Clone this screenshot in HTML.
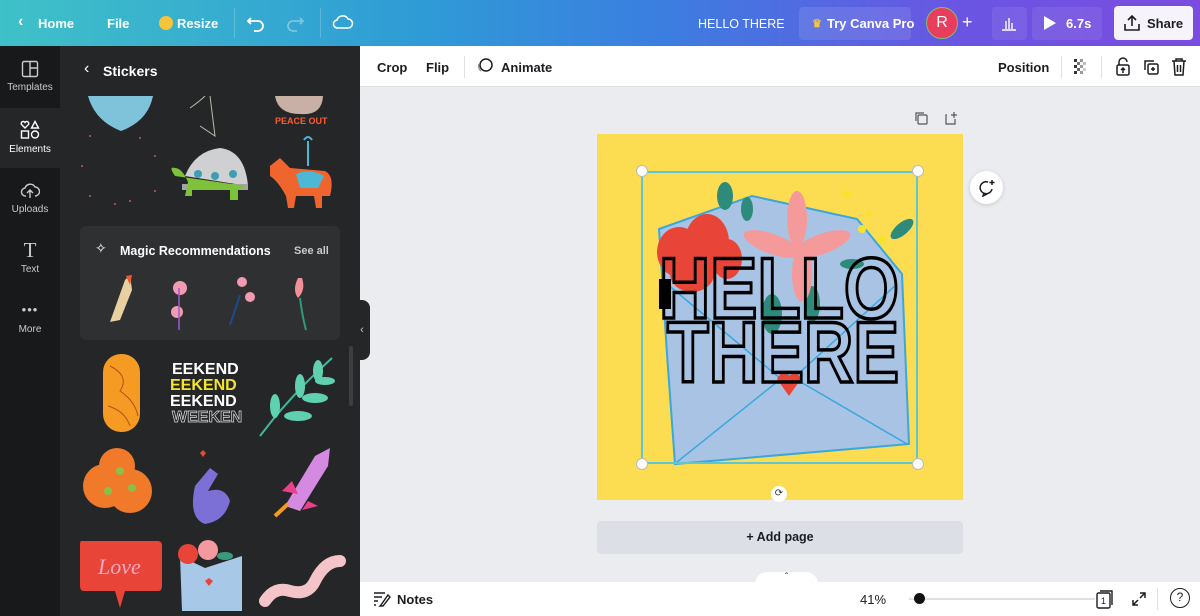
<!DOCTYPE html>
<html><head><meta charset="utf-8"><style>
*{margin:0;padding:0;box-sizing:border-box}
body{width:1200px;height:616px;overflow:hidden;font-family:"Liberation Sans",sans-serif;background:#ebecf0;position:relative}
.top{position:absolute;left:0;top:0;width:1200px;height:46px;background:linear-gradient(90deg,#3fc1c8 0%,#2f9bd6 35%,#3b7ee0 55%,#6a55e2 80%,#7b4ce0 100%);color:#fff;font-size:13px;font-weight:bold}
.top span{position:absolute;top:16px}
.rail{position:absolute;left:0;top:46px;width:60px;height:570px;background:#18191b}
.rail>div{position:absolute;left:0;width:60px;height:60px;text-align:center;color:#c9cacc;font-size:10px}
.rail svg{position:absolute;left:21px;top:14px}
.rail .lb{position:absolute;left:0;top:36px;width:60px}
.panel{position:absolute;left:60px;top:46px;width:300px;height:570px;background:#252627}
.tool{position:absolute;left:360px;top:46px;width:840px;height:41px;background:#fff;border-bottom:1px solid #dde0e4;font-size:13px;font-weight:bold;color:#1b1d21}
.tool span{position:absolute;top:14px}
.bottom{position:absolute;left:360px;top:582px;width:840px;height:34px;background:#fff;font-size:13px;color:#1b1d21}
</style></head><body>
<div class="top">
<span style="left:18px;font-size:16px;top:13px">‹</span><span style="left:38px">Home</span>
<span style="left:107px">File</span>
<div style="position:absolute;left:159px;top:16px;width:14px;height:14px;border-radius:50%;background:#f5c43a"></div>
<span style="left:177px">Resize</span>
<div style="position:absolute;left:234px;top:8px;width:1px;height:30px;background:rgba(255,255,255,.2)"></div>
<svg style="position:absolute;left:246px;top:13px" width="20" height="20" viewBox="0 0 20 20"><path d="M5 5 L2 8 L5 11 M2 8 H12 A5 5 0 0 1 12 18 H8" stroke="#fff" stroke-width="1.8" fill="none"/></svg>
<svg style="position:absolute;left:285px;top:13px" width="20" height="20" viewBox="0 0 20 20"><path d="M15 5 L18 8 L15 11 M18 8 H8 A5 5 0 0 0 8 18 H12" stroke="rgba(255,255,255,.35)" stroke-width="1.8" fill="none"/></svg>
<div style="position:absolute;left:320px;top:8px;width:1px;height:30px;background:rgba(255,255,255,.2)"></div>
<svg style="position:absolute;left:332px;top:12px" width="22" height="20" viewBox="0 0 22 20"><path d="M6 16 A4 4 0 0 1 5 8 A6 6 0 0 1 16 7 A4.5 4.5 0 0 1 16 16 Z" stroke="#fff" stroke-width="1.6" fill="none"/></svg>
<span style="left:698px;font-weight:normal;font-size:12.5px;top:17px">HELLO THERE</span>
<div style="position:absolute;left:799px;top:7px;width:112px;height:33px;background:rgba(255,255,255,.1);border-radius:4px"></div>
<span style="left:812px;color:#f5c43a;font-size:11px;top:17px">♛</span><span style="left:827px">Try Canva Pro</span>
<div style="position:absolute;left:926px;top:7px;width:32px;height:32px;border-radius:50%;background:#e93d5e;border:1.5px solid #7fc06d;text-align:center;line-height:29px;font-size:16px;font-weight:normal">R</div>
<span style="left:962px;font-size:18px;top:12px;font-weight:normal">+</span>
<div style="position:absolute;left:992px;top:7px;width:35px;height:33px;background:rgba(255,255,255,.08);border-radius:4px"></div>
<svg style="position:absolute;left:1000px;top:14px" width="18" height="18" viewBox="0 0 18 18"><path d="M2 16 H16 M6 15 V7 M9 15 V4 M12 15 V9" stroke="#fff" stroke-width="1.4"/></svg>
<div style="position:absolute;left:1032px;top:7px;width:70px;height:33px;background:rgba(255,255,255,.08);border-radius:4px"></div>
<svg style="position:absolute;left:1043px;top:15px" width="14" height="16"><path d="M1 1 L13 8 L1 15Z" fill="#fff"/></svg>
<span style="left:1066px">6.7s</span>
<div style="position:absolute;left:1114px;top:6px;width:79px;height:34px;background:#f6f3fb;border-radius:4px;color:#1b1d21">
<svg style="position:absolute;left:9px;top:8px" width="18" height="18" viewBox="0 0 18 18"><path d="M9 12 V2 M5 6 L9 2 L13 6 M2 10 V16 H16 V10" stroke="#1b1d21" stroke-width="1.6" fill="none"/></svg>
<span style="left:33px;top:10px">Share</span></div>
</div>

<div class="rail">
<div style="top:0"><svg width="18" height="18" viewBox="0 0 18 18"><rect x="1.5" y="1.5" width="15" height="15" rx="1.5" stroke="#c9cacc" stroke-width="1.4" fill="none"/><path d="M9 1.5 V16.5 M9 8 H16.5" stroke="#c9cacc" stroke-width="1.4"/></svg><div class="lb">Templates</div></div>
<div style="top:62px;background:#252627;color:#fff"><svg width="20" height="20" viewBox="0 0 20 20" stroke="#fff" stroke-width="1.4" fill="none" style="left:20px;top:12px"><path d="M5 8 L1.5 4.5 A2 2 0 0 1 5 2.5 A2 2 0 0 1 8.5 4.5Z"/><path d="M15 1.5 L18.5 8 H11.5Z"/><rect x="1.5" y="11" width="7" height="7"/><circle cx="15" cy="14.5" r="3.5"/></svg><div class="lb">Elements</div></div>
<div style="top:122px"><svg width="20" height="18" viewBox="0 0 20 18" stroke="#c9cacc" stroke-width="1.4" fill="none" style="left:20px"><path d="M6 14 A4 4 0 0 1 5 6 A5.5 5.5 0 0 1 15 5 A4.5 4.5 0 0 1 15 14 M10 16 V8 M7 11 L10 8 L13 11"/></svg><div class="lb">Uploads</div></div>
<div style="top:182px"><div style="position:absolute;left:0;top:10px;width:60px;font-size:21px;font-family:'Liberation Serif',serif">T</div><div class="lb">Text</div></div>
<div style="top:242px"><div style="position:absolute;left:0;top:14px;width:60px;font-size:13px;letter-spacing:1px">•••</div><div class="lb">More</div></div>
</div>

<div class="panel">
<span style="position:absolute;left:24px;top:14px;color:#fff;font-size:16px">‹</span>
<span style="position:absolute;left:43px;top:17px;color:#fff;font-size:14px;font-weight:bold">Stickers</span>
<svg style="position:absolute;left:0;top:50px" width="300" height="165">
<path d="M28 0 H93 Q88 25 61 35 Q35 25 28 0Z" fill="#7ec3da"/>
<path d="M130 12 Q140 5 145 0 M140 30 L155 40 L150 0" stroke="#bba" stroke-width="1" fill="none"/>
<path d="M215 0 H263 Q262 20 240 18 Q218 18 215 0Z" fill="#c8b0a6"/>
<text x="215" y="28" font-size="9" font-weight="bold" fill="#ff5b2e">PEACE OUT</text>
<g fill="#c05a6a"><circle cx="30" cy="40" r="1"/><circle cx="80" cy="42" r="1"/><circle cx="95" cy="60" r="1"/><circle cx="22" cy="70" r="1"/><circle cx="95" cy="95" r="1"/><circle cx="30" cy="100" r="1"/><circle cx="55" cy="108" r="1"/><circle cx="70" cy="105" r="1"/></g>
<path d="M125 80 Q135 55 160 52 Q185 55 188 90Z" fill="#cfd0d1"/>
<rect x="122" y="88" width="66" height="6" fill="#a3a4a5"/>
<circle cx="138" cy="78" r="4" fill="#3a9fb0"/><circle cx="155" cy="80" r="4" fill="#3a9fb0"/><circle cx="173" cy="78" r="4" fill="#3a9fb0"/>
<path d="M115 80 Q108 70 115 72 Q122 72 128 86 L125 100 H132 V94 H170 V104 H178 V94 L186 90Z" fill="#7ec23a"/>
<path d="M210 70 L220 62 L230 72 L265 75 Q275 80 270 100 L262 100 L262 112 L256 112 L254 100 L236 100 L234 112 L228 112 L226 100 Q218 85 210 80Z" fill="#f0652e"/>
<path d="M236 78 Q250 72 264 80 L258 92 L240 92Z" fill="#4bb8d8"/>
<path d="M248 70 V45 M244 44 Q248 38 252 44" stroke="#4bb8d8" stroke-width="2" fill="none"/>
</svg>
<div style="position:absolute;left:20px;top:180px;width:260px;height:114px;background:#2f3032;border-radius:6px">
<span style="position:absolute;left:15px;top:14px;color:#fff;font-size:14px">✧</span>
<span style="position:absolute;left:40px;top:18px;color:#fff;font-size:12.5px;font-weight:bold">Magic Recommendations</span>
<span style="position:absolute;left:214px;top:19px;color:#c9cacc;font-size:11px;font-weight:bold">See all</span>
<svg style="position:absolute;left:0;top:44px" width="260" height="66">
<path d="M30 52 L45 10 L50 5 L52 20 L40 50Z" fill="#e8d0a0"/><path d="M46 6 L52 5 L50 15Z" fill="#f05a30"/>
<g fill="#f29ab0"><circle cx="100" cy="18" r="7"/><circle cx="97" cy="42" r="6"/></g><path d="M99 18 V60" stroke="#9a5ad0" stroke-width="1.5"/>
<path d="M160 25 L150 55" stroke="#1e4a8a" stroke-width="2"/><g fill="#f29ab0"><circle cx="162" cy="12" r="5"/><circle cx="170" cy="27" r="5"/></g>
<path d="M218 8 Q212 20 218 28 Q226 20 222 8Z" fill="#f2909a"/><path d="M220 28 Q222 45 226 60" stroke="#2e9a7a" stroke-width="2" fill="none"/>
</svg></div>
<svg style="position:absolute;left:0;top:300px" width="300" height="270">
<rect x="43" y="8" width="37" height="78" rx="18" fill="#f59a22"/>
<path d="M50 20 Q70 30 60 45 Q75 55 78 70 M48 60 Q65 65 70 80" stroke="#b5501a" fill="none"/>
<g font-weight="bold" font-size="16" font-family="Liberation Sans"><text x="112" y="28" fill="#fff">EEKEND</text><text x="110" y="44" fill="#f4e42a">EEKEND</text><text x="110" y="60" fill="#fff">EEKEND</text><text x="112" y="76" fill="none" stroke="#ddd" stroke-width=".7">WEEKEN</text></g>
<path d="M200 90 Q230 50 272 12" stroke="#3fb8a0" stroke-width="2" fill="none"/>
<g fill="#5fd0b0"><ellipse cx="215" cy="60" rx="5" ry="12"/><ellipse cx="240" cy="40" rx="5" ry="12"/><ellipse cx="258" cy="25" rx="5" ry="11"/><ellipse cx="238" cy="70" rx="14" ry="5"/><ellipse cx="255" cy="52" rx="13" ry="5"/><ellipse cx="265" cy="35" rx="10" ry="4"/></g>
<g fill="#f07a2a"><circle cx="45" cy="140" r="22"/><circle cx="70" cy="145" r="22"/><circle cx="57" cy="120" r="18"/></g>
<g fill="#8ac04a"><circle cx="48" cy="145" r="4"/><circle cx="72" cy="142" r="4"/><circle cx="60" cy="125" r="4"/></g>
<path d="M140 107 l3 -3 3 3 -3 4z" fill="#e24a3a"/>
<path d="M135 140 L150 122 L158 128 L148 145 Q165 140 170 155 Q165 175 145 178 Q128 172 135 140Z" fill="#7c70d6"/>
<path d="M225 160 L255 110 L270 102 L268 120 L240 165Z" fill="#d48ae0"/><path d="M228 158 L215 170" stroke="#f59a22" stroke-width="4"/><path d="M232 135 L222 145 L238 148Z M248 155 L258 160 L242 164Z" fill="#e8408a"/>
<path d="M21 195 H98 Q102 195 102 200 V240 Q102 245 98 245 H65 L60 262 L55 245 H24 Q20 245 20 240 V200 Q20 195 21 195Z" fill="#e84538"/>
<text x="38" y="228" font-size="22" font-style="italic" fill="#f8a8c0" font-family="Liberation Serif">Love</text>
<path d="M120 210 L145 222 L182 210 V265 H122Z" fill="#a8c8e8"/>
<g fill="#e84538"><circle cx="128" cy="208" r="10"/></g><circle cx="148" cy="204" r="10" fill="#f29aa0"/><g fill="#3a9a7a"><ellipse cx="165" cy="210" rx="8" ry="4"/></g><path d="M145 235 l4 -3 4 3 -4 5z" fill="#e84538"/>
<path d="M205 255 Q215 240 230 245 Q248 250 255 235 Q265 215 280 215" stroke="#f4c4c8" stroke-width="12" fill="none" stroke-linecap="round"/>
</svg>
<div style="position:absolute;left:289px;top:300px;width:4px;height:60px;background:#3d3e40;border-radius:2px"></div>
</div>
<div style="position:absolute;left:354px;top:300px;width:16px;height:60px;background:#252627;border-radius:0 8px 8px 0;color:#ccc;font-size:11px;text-align:center;line-height:60px">‹</div>

<div class="tool">
<span style="left:17px">Crop</span><span style="left:66px">Flip</span>
<div style="position:absolute;left:104px;top:10px;width:1px;height:22px;background:#dde0e4"></div>
<svg style="position:absolute;left:116px;top:11px" width="20" height="20"><circle cx="10" cy="8" r="6" stroke="#1b1d21" stroke-width="1.5" fill="none"/><path d="M5 14 A6 6 0 0 1 3 7" stroke="#999" stroke-width="1.5" fill="none"/></svg>
<span style="left:141px">Animate</span>
<span style="left:638px">Position</span>
<div style="position:absolute;left:701px;top:10px;width:1px;height:22px;background:#dde0e4"></div>
<svg style="position:absolute;left:713px;top:12px" width="18" height="18"><g fill="#333"><rect x="1" y="1" width="3" height="3"/><rect x="7" y="1" width="3" height="3" fill="#999"/><rect x="4" y="4" width="3" height="3" fill="#777"/><rect x="10" y="4" width="3" height="3" fill="#bbb"/><rect x="1" y="7" width="3" height="3"/><rect x="7" y="7" width="3" height="3" fill="#999"/><rect x="4" y="10" width="3" height="3" fill="#666"/><rect x="10" y="10" width="3" height="3" fill="#ccc"/><rect x="1" y="13" width="3" height="3"/><rect x="7" y="13" width="3" height="3" fill="#999"/></g></svg>
<div style="position:absolute;left:741px;top:10px;width:1px;height:22px;background:#dde0e4"></div>
<svg style="position:absolute;left:754px;top:11px" width="18" height="20" viewBox="0 0 18 20" stroke="#1b1d21" stroke-width="1.5" fill="none"><path d="M5 8 V5 A4 4 0 0 1 13 5"/><rect x="3" y="8" width="12" height="10" rx="1.5"/><path d="M9 16 V11 M7 13 L9 11 L11 13"/></svg>
<svg style="position:absolute;left:782px;top:12px" width="18" height="18" viewBox="0 0 18 18" stroke="#1b1d21" stroke-width="1.5" fill="none"><path d="M3 12 V3 H12"/><rect x="6" y="6" width="10" height="10" rx="1.5"/><path d="M11 9 V13 M9 11 H13"/></svg>
<svg style="position:absolute;left:810px;top:11px" width="18" height="20" viewBox="0 0 18 20" stroke="#1b1d21" stroke-width="1.5" fill="none"><path d="M2 4 H16 M6 4 V2 H12 V4 M4 4 L5 18 H13 L14 4 M7.5 8 V15 M10.5 8 V15"/></svg>
</div>

<svg style="position:absolute;left:914px;top:111px" width="50" height="16" viewBox="0 0 50 16" stroke="#555" stroke-width="1.2" fill="none"><path d="M2 10 V2 H10"/><rect x="4" y="4" width="9" height="9" rx="1"/><path d="M33 4 H32 V13 H41 V8 M40 1 V7 M37 4 H43"/></svg>

<div style="position:absolute;left:597px;top:134px;width:366px;height:366px;background:#fcdc50"></div>
<svg style="position:absolute;left:597px;top:134px" width="366" height="366" viewBox="0 0 366 366">
<path d="M62 95 L155 62 L260 85 L305 140 L312 310 L78 330 L70 220Z" fill="#a9c3e4" stroke="#3aa8dc" stroke-width="2"/>
<path d="M80 328 L190 240 L310 310 M70 150 L190 250 L300 150" stroke="#3aa8dc" stroke-width="1.5" fill="none"/>
<path d="M180 245 Q185 235 192 242 Q200 235 204 245 L192 262Z" fill="#e84538"/>
<g fill="#2e8a7a"><ellipse cx="128" cy="62" rx="8" ry="14"/><ellipse cx="150" cy="75" rx="6" ry="12"/><ellipse cx="305" cy="95" rx="14" ry="6" transform="rotate(-40 305 95)"/><ellipse cx="255" cy="130" rx="12" ry="5"/><ellipse cx="175" cy="180" rx="10" ry="20"/><ellipse cx="215" cy="170" rx="8" ry="18"/></g>
<g fill="#e84538"><ellipse cx="82" cy="118" rx="22" ry="25"/><ellipse cx="110" cy="108" rx="22" ry="28"/><ellipse cx="95" cy="140" rx="22" ry="18"/><ellipse cx="130" cy="125" rx="15" ry="20"/></g>
<g fill="#f59a9a"><ellipse cx="200" cy="85" rx="10" ry="28"/><ellipse cx="175" cy="110" rx="30" ry="10" transform="rotate(20 175 110)"/><ellipse cx="225" cy="110" rx="30" ry="10" transform="rotate(-20 225 110)"/><ellipse cx="205" cy="140" rx="10" ry="28"/></g>
<g fill="#f4e42a"><circle cx="250" cy="60" r="4"/><circle cx="265" cy="95" r="4"/><circle cx="285" cy="105" r="4"/><circle cx="272" cy="80" r="3"/></g>
<g font-family="Liberation Sans" font-weight="bold" fill="none" stroke="#000" stroke-width="3.5">
<text x="62" y="184" font-size="86" textLength="240" lengthAdjust="spacingAndGlyphs">HELLO</text>
<text x="70" y="248" font-size="86" textLength="232" lengthAdjust="spacingAndGlyphs">THERE</text>
</g>
<rect x="62" y="145" width="12" height="30" fill="#000"/>
</svg>
<div style="position:absolute;left:641px;top:171px;width:277px;height:293px;border:2px solid #5ec7d6"></div>
<div style="position:absolute;left:636px;top:165px;width:12px;height:12px;border-radius:50%;background:#fff;border:1px solid #bbb"></div>
<div style="position:absolute;left:912px;top:165px;width:12px;height:12px;border-radius:50%;background:#fff;border:1px solid #bbb"></div>
<div style="position:absolute;left:636px;top:458px;width:12px;height:12px;border-radius:50%;background:#fff;border:1px solid #bbb"></div>
<div style="position:absolute;left:912px;top:458px;width:12px;height:12px;border-radius:50%;background:#fff;border:1px solid #bbb"></div>
<div style="position:absolute;left:771px;top:486px;width:16px;height:16px;border-radius:50%;background:#fff;font-size:10px;text-align:center;line-height:16px;color:#333">⟳</div>
<div style="position:absolute;left:970px;top:171px;width:33px;height:33px;border-radius:50%;background:#fff;box-shadow:0 1px 4px rgba(0,0,0,.15)"><svg style="margin:8px" width="18" height="18" viewBox="0 0 18 18" stroke="#1b1d21" stroke-width="1.5" fill="none"><path d="M10 3 A6 6 0 1 0 14 10 M6 14 L5 17 L9 15 M14 1 V6 M11.5 3.5 H16.5"/></svg></div>

<div style="position:absolute;left:597px;top:521px;width:366px;height:33px;background:#dcdfe6;border-radius:4px;text-align:center;line-height:33px;font-size:12.5px;font-weight:bold;color:#1b1d21">+ Add page</div>
<div style="position:absolute;left:755px;top:572px;width:63px;height:14px;background:#fff;border-radius:12px 12px 0 0;text-align:center;font-size:10px;color:#333">ˆ</div>

<div class="bottom">
<svg style="position:absolute;left:13px;top:9px" width="18" height="16" viewBox="0 0 18 16" stroke="#1b1d21" stroke-width="1.4" fill="none"><path d="M1 2 H12 M1 6 H9 M1 10 H5 M1 14 H3 M8 14 L15 4 L17 6 L10 15 L7 15Z"/></svg>
<span style="position:absolute;left:37px;top:10px;font-weight:bold">Notes</span>
<span style="position:absolute;left:500px;top:10px">41%</span>
<div style="position:absolute;left:549px;top:16px;width:186px;height:2px;background:#dde0e4"></div>
<div style="position:absolute;left:554px;top:11px;width:11px;height:11px;border-radius:50%;background:#111"></div>
<svg style="position:absolute;left:736px;top:6px" width="18" height="22" viewBox="0 0 18 22" stroke="#1b1d21" stroke-width="1.4" fill="none"><rect x="1" y="5" width="13" height="15" rx="1.5"/><path d="M4 3 H16 V17"/><text x="5" y="16" font-size="9" fill="#1b1d21" stroke="none">1</text></svg>
<svg style="position:absolute;left:771px;top:9px" width="16" height="16" viewBox="0 0 16 16" stroke="#1b1d21" stroke-width="1.5" fill="none"><path d="M9 2 H14 V7 M14 2 L9 7 M2 9 V14 H7 M2 14 L7 9"/></svg>
<div style="position:absolute;left:797px;top:6px;width:1px;height:22px;background:#dde0e4"></div>
<div style="position:absolute;left:810px;top:6px;width:20px;height:20px;border-radius:50%;border:1.5px solid #1b1d21;text-align:center;line-height:17px;font-size:12px">?</div>
</div>
</body></html>
